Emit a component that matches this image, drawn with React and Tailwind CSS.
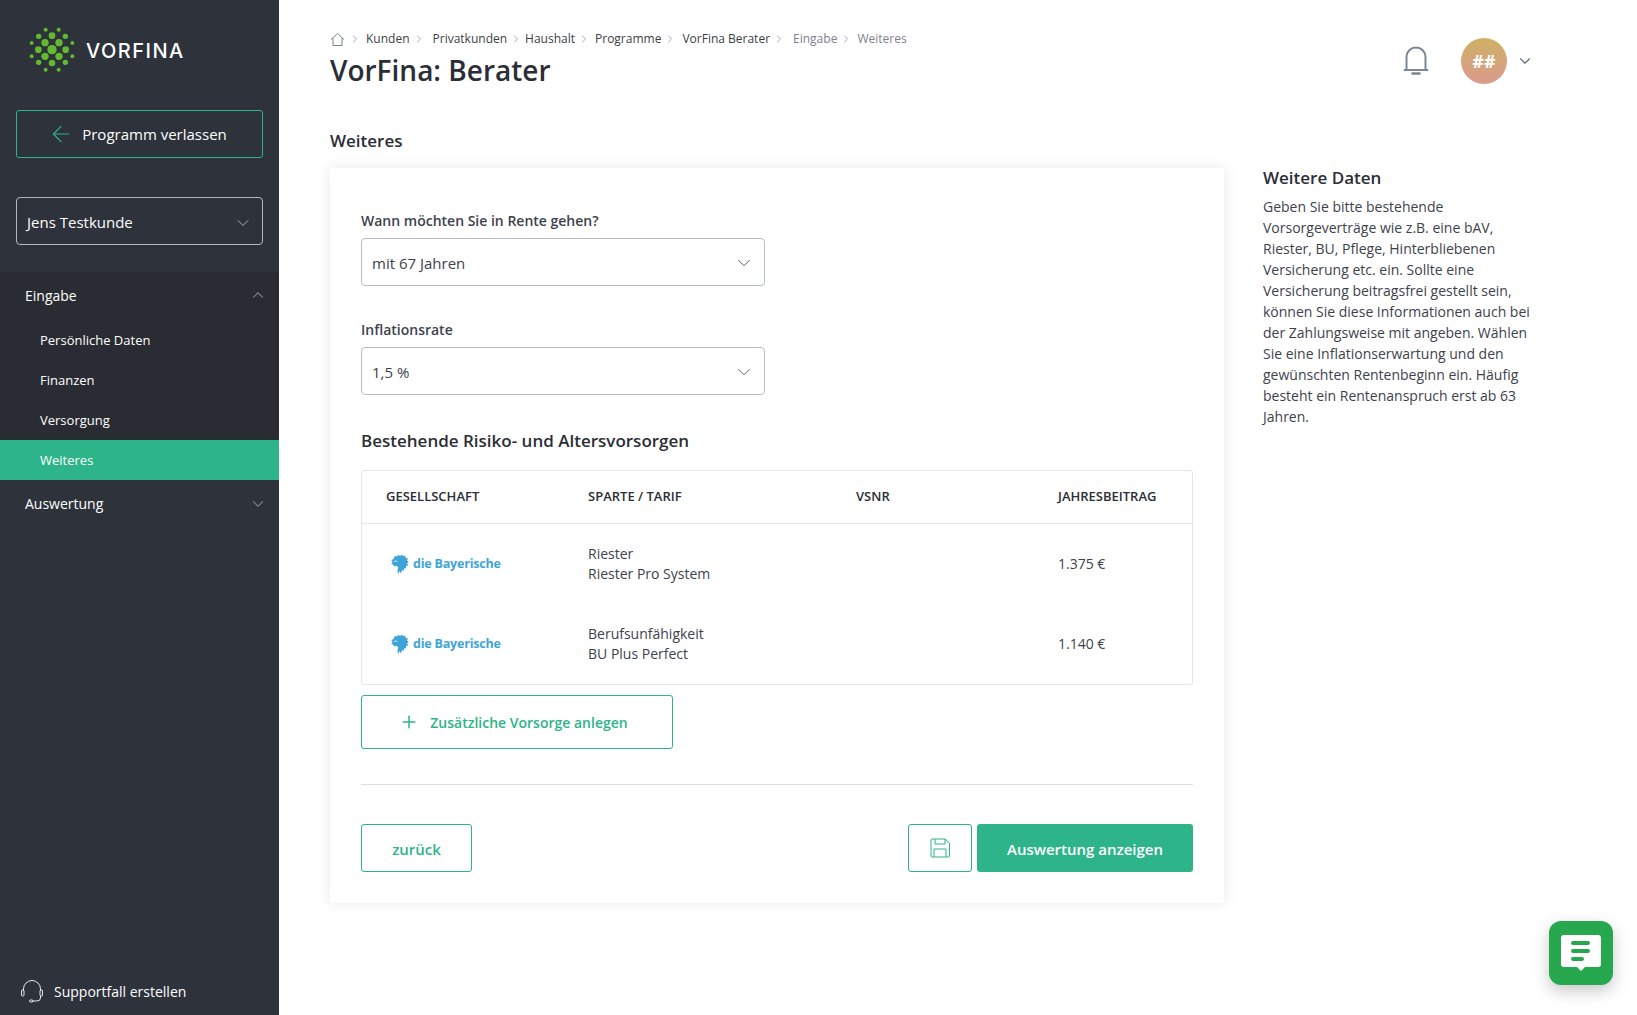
import { ArrowLeft, ChevronDown, ChevronRight, ChevronUp, Plus } from "lucide-react";

const breadcrumbs = [
  { label: "Kunden", cls: "ml-[5px]" },
  { label: "Privatkunden", cls: "ml-[8px]" },
  { label: "Haushalt", cls: "ml-[3px]" },
  { label: "Programme", cls: "ml-[5px]" },
  { label: "VorFina Berater", cls: "ml-[6px]" },
  { label: "Eingabe", cls: "ml-[8px] text-[#7c8290]" },
  { label: "Weiteres", cls: "ml-[5px] text-[#7c8290]" },
];

const infoLines = [
  "Geben Sie bitte bestehende",
  "Vorsorgeverträge wie z.B. eine bAV,",
  "Riester, BU, Pflege, Hinterbliebenen",
  "Versicherung etc. ein. Sollte eine",
  "Versicherung beitragsfrei gestellt sein,",
  "können Sie diese Informationen auch bei",
  "der Zahlungsweise mit angeben. Wählen",
  "Sie eine Inflationserwartung und den",
  "gewünschten Rentenbeginn ein. Häufig",
  "besteht ein Rentenanspruch erst ab 63",
  "Jahren.",
];

const contracts = [
  { sparte: "Riester", tarif: "Riester Pro System", beitrag: "1.375 €" },
  { sparte: "Berufsunfähigkeit", tarif: "BU Plus Perfect", beitrag: "1.140 €" },
];

const logoDots = [
  [157, 150, 14],
  [136, 129, 11], [178, 129, 11], [136, 170, 11], [178, 170, 11],
  [157, 108, 10], [157, 190, 10], [116, 150, 10], [198, 150, 10],
  [117, 110, 8], [197, 110, 8], [117, 188, 8], [197, 188, 8],
  [138, 90, 6], [177, 90, 6], [138, 210, 6], [177, 210, 6],
  [96, 130, 6], [218, 130, 6], [96, 170, 6], [218, 170, 6],
];

const Logo = () => (
  <div className="flex items-center h-[46px] ml-[29px]">
    <svg width="46" height="46" viewBox="88 82 138 138">
      {logoDots.map(([cx, cy, r]) => (
        <circle key={`${cx}-${cy}`} cx={cx} cy={cy} r={r} fill="#62bb2e" />
      ))}
    </svg>
    <span className="ml-[11px] pt-[2px] text-[20px] leading-none font-medium text-white tracking-[1.5px] font-['Inter',sans-serif]">
      VORFINA
    </span>
  </div>
);

const BayerischeLogo = () => (
  <div className="flex items-center text-[#3ea4d8] ml-[5px]">
    <svg width="18" height="21" viewBox="0 0 18 21" fill="currentColor">
      <path d="M4 2 L6 2.5 L7 0.8 L9 2 L11 0.5 L12 2.2 L14.5 1.8 L14.6 4 L17 4.5 L16 6.5 L17.8 8 L16 9.5 L17.3 11.5 L15 12 L15.2 14.5 L13 14.2 L12.8 17 L11 16 L10 19.5 L8.5 17 L7 20 L6.4 16.5 L7.2 13.5 L5.8 11.8 L3 12.5 L2.4 10.8 L0.4 10 L1.6 8 L0.2 6 L2.2 5.2 Z" />
      <path d="M3 7.5 q2 -1.2 3.5 0.2" fill="none" stroke="#ffffff" strokeWidth="0.8" />
    </svg>
    <span className="ml-[4px] text-[12.5px] leading-none font-bold tracking-[-0.2px] font-['Open_Sans',sans-serif]">
      die Bayerische
    </span>
  </div>
);

const Select = ({ value }) => (
  <div className="flex items-center justify-between w-[404px] h-[48px] pl-[10px] pr-[9px] border border-[#b9bdc7] rounded-[4px] text-[15px] text-[#3d424d]">
    <span className="pt-[2px]">{value}</span>
    <ChevronDown size={22} strokeWidth={1} className="mt-[2px] text-[#4b505c]" />
  </div>
);

const SubItem = ({ label, active }) => (
  <div className={`flex items-center h-[40px] pl-[40px] pt-[1px] text-[13px] text-white ${active ? "bg-[#2db489]" : ""}`}>
    {label}
  </div>
);

const Sidebar = () => (
  <aside className="flex flex-col w-[279px] shrink-0 h-full bg-[#2d323b] text-white">
    <div className="pt-[27px]">
      <Logo />
    </div>

    <button className="flex items-center justify-center gap-[8px] mx-[16px] mt-[37px] h-[48px] pr-[4px] border border-[#2db489] rounded-[3px] text-[15px] text-white">
      <ArrowLeft size={26} strokeWidth={1.1} className="text-[#2db489]" />
      Programm verlassen
    </button>

    <div className="flex items-center justify-between mx-[16px] mt-[39px] h-[48px] pl-[10px] pr-[9px] border border-[#b4b8c2] rounded-[4px] text-[15px]">
      <span className="pt-[2px]">Jens Testkunde</span>
      <ChevronDown size={20} strokeWidth={1} className="mt-[3px] text-[#c9ccd3]" />
    </div>

    <nav className="mt-[27px]">
      <div className="bg-[#292c32]">
        <div className="flex items-center justify-between h-[48px] pl-[25px] pr-[12px] pb-[2px] text-[14px]">
          <span>Eingabe</span>
          <ChevronUp size={18} strokeWidth={1.5} className="text-[#777c86]" />
        </div>
        <SubItem label="Persönliche Daten" />
        <SubItem label="Finanzen" />
        <SubItem label="Versorgung" />
        <SubItem label="Weiteres" active />
      </div>
      <div className="flex items-center justify-between h-[47px] pl-[25px] pr-[12px] text-[14px]">
        <span>Auswertung</span>
        <ChevronDown size={18} strokeWidth={1.5} className="text-[#777c86]" />
      </div>
    </nav>

    <div className="flex items-center mt-auto mb-[12px] ml-[20px] text-[14px]">
      <svg width="24" height="24" viewBox="0 0 24 24" fill="none" stroke="#e6e7ea" strokeWidth="1">
        <path d="M3.5 12 V10 a8.5 8.5 0 0 1 17 0 V12" />
        <rect x="1.5" y="11" width="2.5" height="6" rx="1" />
        <rect x="20" y="11" width="2.5" height="6" rx="1" />
        <path d="M20.5 17 V19 q0 3 -4 3 H12" />
        <rect x="9.5" y="21" width="3.5" height="2" rx="1" />
      </svg>
      <span className="ml-[10px]">Supportfall erstellen</span>
    </div>
  </aside>
);

const Header = () => (
  <header className="flex justify-between">
    <div>
      <div className="flex items-center h-[20px] text-[12px] text-[#3a3f4a]">
        <svg width="15" height="15" viewBox="0 0 15 15" fill="none" stroke="#7c8290" strokeWidth="1" className="mr-[1px]">
          <path d="M1 7.5 L7.5 1.5 L14 7.5" />
          <path d="M3 6 V13.5 H12 V6" />
        </svg>
        {breadcrumbs.map((crumb) => (
          <span key={crumb.label} className="flex items-center">
            <ChevronRight size={12} strokeWidth={1} className="ml-[3px] text-[#4e5360]" />
            <span className={crumb.cls}>{crumb.label}</span>
          </span>
        ))}
      </div>
      <h1 className="mt-[2px] text-[28px] leading-[38px] font-semibold text-[#2b2e36]">VorFina: Berater</h1>
    </div>
    <div className="flex items-center h-[46px] mt-[9px] mr-[103px]">
      <svg width="26" height="30" viewBox="0 0 26 30" fill="none" stroke="#7e8594" strokeWidth="2">
        <path d="M3.5 23 V11 a9.5 9.5 0 0 1 19 0 V23" />
        <path d="M1.5 24 H24.5" strokeLinecap="round" />
        <path d="M9.5 27.5 h7" strokeWidth="2.6" strokeLinecap="round" />
      </svg>
      <div className="flex items-center justify-center w-[46px] h-[46px] ml-[32px] rounded-full bg-gradient-to-b from-[#ceb063] to-[#da9a8c] text-[18px] font-bold text-white">
        ##
      </div>
      <ChevronDown size={18} strokeWidth={1.5} className="ml-[9px] text-[#636a78]" />
    </div>
  </header>
);

const ContractsTable = () => (
  <div className="mt-[16px] border border-[#e3e5ec] rounded-[3px] text-[14px] text-[#3d424d]">
    <div className="grid grid-cols-[202px_268px_202px_1fr] items-center h-[53px] pl-[24px] border-b border-[#e3e5ec] text-[13px] font-semibold uppercase text-[#2b2e36]">
      <span>Gesellschaft</span>
      <span>Sparte / Tarif</span>
      <span>VSNR</span>
      <span>Jahresbeitrag</span>
    </div>
    {contracts.map((row) => (
      <div key={row.tarif} className="grid grid-cols-[202px_268px_202px_1fr] items-center h-[80px] pl-[24px] leading-[20px]">
        <BayerischeLogo />
        <div>
          <div>{row.sparte}</div>
          <div>{row.tarif}</div>
        </div>
        <span />
        <span>{row.beitrag}</span>
      </div>
    ))}
  </div>
);

const FormCard = () => (
  <section className="w-[894px] h-[735px] mt-[15px] px-[31px] pt-[43px] bg-white shadow-[0_0_12px_rgba(30,35,50,0.10)]">
    <label className="block text-[14px] leading-[20px] font-semibold text-[#3d424d]">Wann möchten Sie in Rente gehen?</label>
    <div className="mt-[7px]">
      <Select value="mit 67 Jahren" />
    </div>
    <label className="block mt-[34px] text-[14px] leading-[20px] font-semibold text-[#3d424d]">Inflationsrate</label>
    <div className="mt-[7px]">
      <Select value="1,5 %" />
    </div>
    <h3 className="mt-[33px] text-[17px] leading-[26px] font-semibold text-[#2b2e36]">Bestehende Risiko- und Altersvorsorgen</h3>
    <ContractsTable />
    <button className="flex items-center justify-center gap-[11px] w-[312px] h-[54px] mt-[10px] pr-[7px] border border-[#2db489] rounded-[3px] text-[14px] font-semibold text-[#2db489]">
      <Plus size={20} strokeWidth={1.8} />
      Zusätzliche Vorsorge anlegen
    </button>
    <hr className="mt-[35px] border-t border-[#dcdee5]" />
    <div className="flex items-center mt-[39px]">
      <button className="w-[111px] h-[48px] pt-[2px] border border-[#2db489] rounded-[3px] text-[15px] font-semibold text-[#2db489]">zurück</button>
      <button className="flex items-center justify-center w-[64px] h-[48px] ml-auto border border-[#2db489] rounded-[3px] text-[#2db489]">
        <svg width="20" height="20" viewBox="0 0 20 20" fill="none" stroke="currentColor" strokeWidth="1">
          <path d="M1 2 a1 1 0 0 1 1 -1 H15 L19.5 5 V18 a1 1 0 0 1 -1 1 H2 a1 1 0 0 1 -1 -1 Z" />
          <path d="M5 1 V6 H15 V1" />
          <path d="M4 19 V11 H16 V19" />
        </svg>
      </button>
      <button className="w-[216px] h-[48px] ml-[5px] pt-[2px] bg-[#2db489] rounded-[3px] text-[15px] font-semibold text-white">Auswertung anzeigen</button>
    </div>
  </section>
);

const InfoPanel = () => (
  <aside className="w-[285px] ml-[39px] mt-[12px] pt-[1px]">
    <h3 className="text-[17px] leading-[24px] font-semibold text-[#2b2e36]">Weitere Daten</h3>
    <div className="mt-[6px] text-[14px] leading-[21px] text-[#3d424d]">
      {infoLines.map((line) => (
        <div key={line} className="whitespace-nowrap">{line}</div>
      ))}
    </div>
  </aside>
);

const App = () => (
  <div className="relative flex w-full h-screen overflow-hidden bg-white font-['Open_Sans',sans-serif]">
    <Sidebar />
    <main className="flex-1 pl-[51px] pt-[29px]">
      <Header />
      <h2 className="mt-[40px] text-[17px] leading-[24px] font-semibold text-[#2b2e36]">Weiteres</h2>
      <div className="flex items-start">
        <FormCard />
        <InfoPanel />
      </div>
    </main>

    <button className="absolute right-[24px] bottom-[30px] flex items-center justify-center w-[64px] h-[64px] rounded-[12px] bg-[#27a84f] shadow-[0_6px_16px_rgba(0,0,0,0.22)]">
      <svg width="40" height="37" viewBox="0 0 40 37">
        <path d="M3 0 H37 a3 3 0 0 1 3 3 V29 a3 3 0 0 1 -3 3 H24 L20 36 L16 32 H3 a3 3 0 0 1 -3 -3 V3 a3 3 0 0 1 3 -3 Z" fill="#fff" />
        <rect x="10" y="6" width="19" height="4" rx="2" fill="#27a84f" />
        <rect x="10" y="14" width="19" height="4" rx="2" fill="#27a84f" />
        <rect x="10" y="22" width="13" height="4" rx="2" fill="#27a84f" />
      </svg>
    </button>
  </div>
);

export default App;
